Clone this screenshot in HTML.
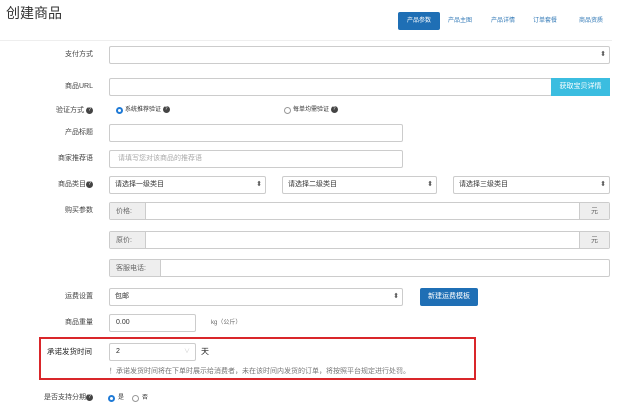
<!DOCTYPE html>
<html><head><meta charset="utf-8"><style>
*{box-sizing:border-box;margin:0;padding:0}
body{width:630px;height:400px;overflow:hidden;background:#fff;font-family:"Liberation Sans","Noto Sans CJK SC",sans-serif;color:#333;position:relative;font-size:7px}
.a{position:absolute}
.lbl{position:absolute;right:537px;font-size:7px;color:#444;white-space:nowrap;line-height:10px}
.in{position:absolute;border:1px solid #ccc;border-radius:2px;background:#fff;height:18px}
.sel:after{content:"⬍";position:absolute;right:3px;top:3px;font-size:7px;color:#555}
.t{position:absolute;font-size:7px;line-height:10px;white-space:nowrap}
.add{position:absolute;top:0;bottom:0;background:#eee;border-color:#ccc;color:#666;font-size:7px;display:flex;align-items:center;justify-content:center}
.q{display:inline-block;width:7px;height:7px;border-radius:50%;background:#444;color:#fff;font-size:5px;line-height:7px;text-align:center;vertical-align:middle}
</style></head><body>
<div class="t" style="left:6px;top:4px;font-size:14px;line-height:18px;color:#333">创建商品</div>
<div class="a" style="left:398px;top:12px;width:42px;height:18px;background:#1f6fb5;border-radius:2px;color:#fff;font-size:6px;text-align:center;line-height:18px">产品参数</div>
<div class="t" style="left:448px;top:16px;font-size:6px;color:#337ab7">产品主图</div>
<div class="t" style="left:491px;top:16px;font-size:6px;color:#337ab7">产品详情</div>
<div class="t" style="left:533px;top:16px;font-size:6px;color:#337ab7">订单套餐</div>
<div class="t" style="left:579px;top:16px;font-size:6px;color:#337ab7">商品资质</div>
<div class="a" style="left:0;top:40px;width:612px;height:1px;background:#eee"></div>

<div class="lbl" style="top:50px">支付方式</div>
<div class="in sel" style="left:109px;top:46px;width:501px"></div>

<div class="lbl" style="top:98px;top:98px;display:none"></div>
<div class="lbl" style="top:98px;visibility:hidden">x</div>
<div class="lbl" style="top:98px;display:none"></div>
<div class="lbl" style="top:97px;display:none"></div>
<div class="lbl" style="top:82px">商品URL</div>
<div class="in" style="left:109px;top:78px;width:443px"></div>
<div class="a" style="left:551px;top:78px;width:59px;height:18px;background:#3bbde0;color:#fff;font-size:7px;text-align:center;line-height:18px">获取宝贝详情</div>

<div class="lbl" style="top:106px">验证方式 <span class="q">?</span></div>
<div class="a" style="left:116px;top:107px;width:7px;height:7px;border-radius:50%;border:2px solid #1f7ad6"></div>
<div class="t" style="left:125px;top:105px;font-size:6px">系统推荐验证 <span class="q">?</span></div>
<div class="a" style="left:284px;top:107px;width:7px;height:7px;border-radius:50%;border:1px solid #999"></div>
<div class="t" style="left:293px;top:105px;font-size:6px">每单均需验证 <span class="q">?</span></div>

<div class="lbl" style="top:128px">产品标题</div>
<div class="in" style="left:109px;top:124px;width:294px"></div>
<div class="lbl" style="top:154px">商家推荐语</div>
<div class="in" style="left:109px;top:150px;width:294px"><span class="t" style="left:8px;top:3px;color:#aaa">请填写您对该商品的推荐语</span></div>

<div class="lbl" style="top:180px">商品类目<span class="q">?</span></div>
<div class="in sel" style="left:109px;top:176px;width:157px"><span class="t" style="left:5px;top:3px">请选择一级类目</span></div>
<div class="in sel" style="left:282px;top:176px;width:155px"><span class="t" style="left:5px;top:3px">请选择二级类目</span></div>
<div class="in sel" style="left:453px;top:176px;width:157px"><span class="t" style="left:5px;top:3px">请选择三级类目</span></div>

<div class="lbl" style="top:206px">购买参数</div>
<div class="in" style="left:109px;top:202px;width:501px"><div class="add" style="left:0;width:36px;border-right:1px solid #ccc;justify-content:flex-start;padding-left:6px">价格:</div><div class="add" style="right:0;width:30px;border-left:1px solid #ccc">元</div></div>
<div class="in" style="left:109px;top:231px;width:501px"><div class="add" style="left:0;width:36px;border-right:1px solid #ccc;justify-content:flex-start;padding-left:6px">原价:</div><div class="add" style="right:0;width:30px;border-left:1px solid #ccc">元</div></div>
<div class="in" style="left:109px;top:259px;width:501px"><div class="add" style="left:0;width:51px;border-right:1px solid #ccc;justify-content:flex-start;padding-left:6px">客服电话:</div></div>

<div class="lbl" style="top:292px">运费设置</div>
<div class="in sel" style="left:109px;top:288px;width:294px"><span class="t" style="left:5px;top:3px">包邮</span></div>
<div class="a" style="left:420px;top:288px;width:58px;height:18px;background:#1f6fb5;border-radius:2px;color:#fff;font-size:7px;text-align:center;line-height:18px">新建运费模板</div>

<div class="lbl" style="top:318px">商品重量</div>
<div class="in" style="left:109px;top:314px;width:87px"><span class="t" style="left:6px;top:3px">0.00</span></div>
<div class="t" style="left:211px;top:318px;font-size:6px;color:#666">kg（公斤）</div>

<div class="a" style="left:39px;top:337px;width:437px;height:43px;border:2px solid #d9262a"></div>
<div class="t" style="left:47px;top:347px;font-size:7.5px;color:#222">承诺发货时间</div>
<div class="in" style="left:109px;top:343px;width:87px"><span class="t" style="left:6px;top:3px;color:#222">2</span><span class="t" style="right:5px;top:3px;color:#ccc;font-size:6px">∨</span></div>
<div class="t" style="left:201px;top:347px;font-size:8px;color:#222">天</div>
<div class="t" style="left:109px;top:367px;font-size:7px;color:#777">！承诺发货时间将在下单时展示给消费者，未在该时间内发货的订单，将按照平台规定进行处罚。</div>

<div class="lbl" style="top:393px">是否支持分期<span class="q">?</span></div>
<div class="a" style="left:108px;top:395px;width:7px;height:7px;border-radius:50%;border:2px solid #1f7ad6"></div>
<div class="t" style="left:118px;top:393px;font-size:6px">是</div>
<div class="a" style="left:132px;top:395px;width:7px;height:7px;border-radius:50%;border:1px solid #999"></div>
<div class="t" style="left:142px;top:393px;font-size:6px">否</div>
</body></html>
